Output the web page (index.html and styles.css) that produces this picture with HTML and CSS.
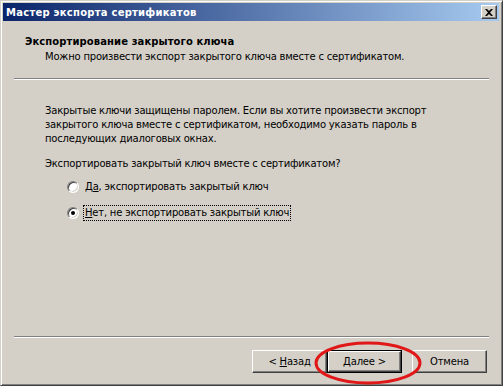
FILE: index.html
```html
<!DOCTYPE html>
<html lang="ru">
<head>
<meta charset="utf-8">
<link rel="stylesheet" href="styles.css">
</head>
<body>
<div class="window">
  <div class="titlebar">
    <span class="title">Мастер экспорта сертификатов</span>
    <span class="close"><svg width="8" height="7" viewBox="0 0 8 7"><path d="M0 0h2l2 2 2-2h2L5 3.5 8 7H6L4 5 2 7H0l3-3.5z" fill="#000"/></svg></span>
  </div>
  <div class="header">
    <div class="h-title">Экспортирование закрытого ключа</div>
    <div class="h-sub">Можно произвести экспорт закрытого ключа вместе с сертификатом.</div>
  </div>
  <div class="sep"></div>
  <div class="content">
    <p class="desc">Закрытые ключи защищены паролем. Если вы хотите произвести экспорт закрытого ключа вместе с сертификатом, необходимо указать пароль в последующих диалоговых окнах.</p>
    <p class="question">Экспортировать закрытый ключ вместе с сертификатом?</p>
    <div class="options">
      <div class="opt"><span class="radio"></span><span class="lbl">Д<u>а</u>, экспортировать закрытый ключ</span></div>
      <div class="opt"><span class="radio checked"></span><span class="lbl focus"><u>Н</u>ет, не экспортировать закрытый ключ</span></div>
    </div>
  </div>
  <div class="sep bottom"></div>
  <div class="buttons">
    <span class="btn"><span>&lt; <u>Н</u>азад</span></span>
    <span class="btn default"><span class="inner"><span><u>Д</u>алее &gt;</span></span></span>
    <span class="btn cancel"><span>Отмена</span></span>
  </div>
  <svg class="mark" width="120" height="50" viewBox="0 0 120 50"><ellipse cx="60" cy="24" rx="52" ry="20" fill="none" stroke="#e01818" stroke-width="3"/></svg>
</div>
</body>
</html>
```
FILE: styles.css
```css
* { box-sizing: border-box; }
html, body { margin: 0; padding: 0; }
body {
  background: #d4d0c8;
  font-family: "DejaVu Sans", Verdana, sans-serif;
  font-size: 10px;
  letter-spacing: -0.2px;
  color: #000;
}
.window {
  position: relative;
  width: 503px;
  height: 386px;
  background: #d4d0c8;
  border: 1px solid;
  border-color: #d4d0c8 #404040 #404040 #d4d0c8;
  box-shadow: inset 1px 1px 0 #fff, inset -1px -1px 0 #808080;
  padding: 2px 3px 3px 2px;
  display: flex;
  flex-direction: column;
}
.titlebar {
  height: 18px;
  background: linear-gradient(to right, #0a246a, #a6caf0);
  display: flex;
  align-items: center;
  justify-content: space-between;
  padding: 0 2px 0 3px;
}
.title {
  color: #fff;
  font-weight: bold;
  font-size: 10px;
  letter-spacing: 0.25px;
}
.close {
  width: 16px;
  height: 14px;
  background: #d4d0c8;
  border: 1px solid;
  border-color: #fff #404040 #404040 #fff;
  box-shadow: inset -1px -1px 0 #808080;
  display: flex;
  align-items: center;
  justify-content: center;
}
.header {
  padding: 14px 0 0 22px;
  height: 57px;
}
.h-title {
  font-weight: bold;
  font-size: 10px;
  letter-spacing: 0.1px;
  line-height: 14px;
}
.h-sub {
  padding-left: 20px;
  line-height: 15px;
}
.sep {
  margin: 0 10px 0 11px;
  height: 2px;
  border-top: 1px solid #808080;
  border-bottom: 1px solid #fff;
}
.content {
  flex: 1;
  padding: 24px 40px 0 42px;
}
.desc {
  margin: 0;
  line-height: 14px;
  width: 390px;
}
.question {
  margin: 11px 0 0;
  line-height: 14px;
}
.options {
  margin: 8px 0 0 22px;
  display: flex;
  flex-direction: column;
  gap: 10px;
}
.opt {
  display: flex;
  align-items: center;
  gap: 4px;
  height: 16px;
}
.radio {
  position: relative;
  width: 12px;
  height: 12px;
  border-radius: 50%;
  background: #fff;
  border: 1px solid;
  border-color: #808080 #fff #fff #808080;
  box-shadow: inset 1px 1px 0 #404040, inset -1px -1px 0 #d4d0c8;
}
.radio.checked::after {
  content: "";
  position: absolute;
  left: 3px;
  top: 3px;
  width: 4px;
  height: 4px;
  border-radius: 50%;
  background: #000;
}
.lbl {
  padding: 1px 1px;
  border: 1px solid transparent;
  line-height: 12px;
}
.lbl.focus {
  border: 1px dotted #000;
}
.buttons {
  height: 44px;
  display: flex;
  justify-content: flex-end;
  align-items: flex-start;
  padding: 12px 12px 0 0;
}
.btn {
  width: 75px;
  height: 23px;
  display: flex;
  align-items: center;
  justify-content: center;
  border: 1px solid;
  border-color: #fff #404040 #404040 #fff;
  box-shadow: inset -1px -1px 0 #808080;
  line-height: 1;
}
.btn.default {
  border: 1px solid #000;
  box-shadow: none;
  padding: 0;
}
.btn.default .inner {
  width: 100%;
  height: 100%;
  display: flex;
  align-items: center;
  justify-content: center;
  border: 1px solid;
  border-color: #fff #404040 #404040 #fff;
  box-shadow: inset -1px -1px 0 #808080;
}
.btn.cancel { margin-left: 10px; }
.mark {
  position: absolute;
  left: 307px;
  top: 338px;
}
```
